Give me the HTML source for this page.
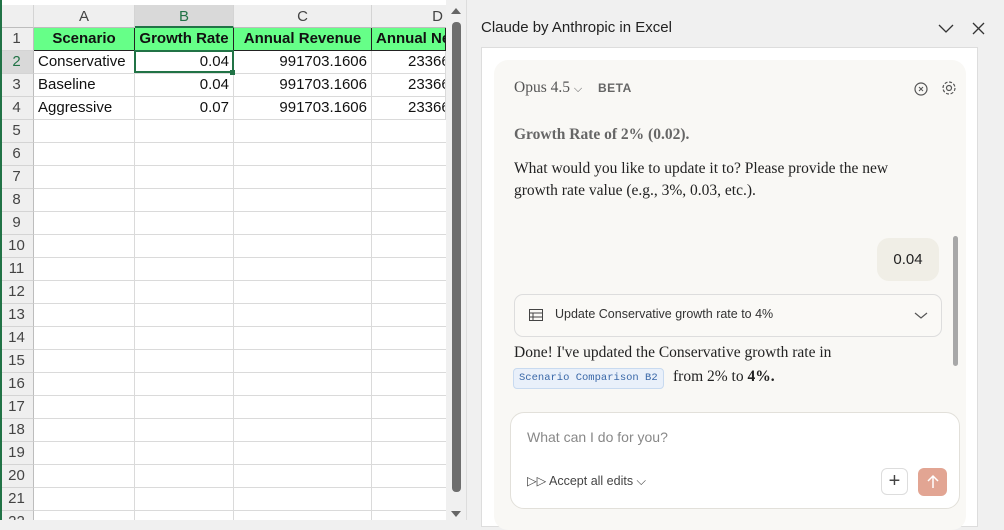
<!DOCTYPE html>
<html><head><style>
body{margin:0;width:1004px;height:520px;overflow:hidden;background:#f0f0f0;font-family:"Liberation Sans",sans-serif;position:relative}
.g{position:absolute;left:0;top:0;width:446px;height:520px;background:#fff;overflow:hidden}
.ch{position:absolute;top:5px;height:23px;background:#efefef;border-right:1px solid #d4d4d4;border-bottom:1px solid #bdbdbd;box-sizing:border-box;text-align:center;font-size:15px;color:#444;line-height:23px}
.rh{position:absolute;left:0;width:34px;height:23px;background:#efefef;border-bottom:1px solid #d4d4d4;border-right:1px solid #bdbdbd;box-sizing:border-box;text-align:center;font-size:15px;color:#444;line-height:22px}
.c{position:absolute;height:23px;border-right:1px solid #dadada;border-bottom:1px solid #dadada;box-sizing:border-box;font-size:15px;line-height:22px;padding:0 4px;white-space:nowrap;overflow:hidden;color:#111}
.h{background:#66ff88;font-weight:bold;border-color:#222;text-align:center}
.r{text-align:right}
.serif{font-family:"Liberation Serif",serif}
</style></head><body>
<div class="g">
<div class="ch" style="left:0;width:34px;background:#efefef"></div>
<div class="ch" style="left:34px;width:101px">A</div>
<div class="ch" style="left:135px;width:99px;background:#d9d9d9;color:#217346;border-bottom:2px solid #217346">B</div>
<div class="ch" style="left:234px;width:138px">C</div>
<div class="ch" style="left:372px;width:80px;text-align:right;padding-right:8px">D</div>
<div id="rows"></div>
</div>
<script>
var s='';for(var i=1;i<=22;i++){var t=28+(i-1)*23;s+='<div class="rh" style="top:'+t+'px'+(i==2?';background:#d9d9d9;color:#217346':'')+'">'+i+'</div>';
if(i>4){s+='<div class="c" style="left:34px;top:'+t+'px;width:101px"></div><div class="c" style="left:135px;top:'+t+'px;width:99px"></div><div class="c" style="left:234px;top:'+t+'px;width:138px"></div><div class="c" style="left:372px;top:'+t+'px;width:80px"></div>';}}
document.getElementById('rows').innerHTML=s;
</script>
<div style="position:absolute;left:0;top:0">
<div class="c h" style="left:34px;top:28px;width:101px">Scenario</div>
<div class="c h" style="left:135px;top:28px;width:99px">Growth Rate</div>
<div class="c h" style="left:234px;top:28px;width:138px">Annual Revenue</div>
<div class="c h" style="left:372px;top:28px;width:74px;text-align:left">Annual Net</div>
<div class="c" style="left:34px;top:51px;width:101px">Conservative</div>
<div class="c r" style="left:135px;top:51px;width:99px">0.04</div>
<div class="c r" style="left:234px;top:51px;width:138px">991703.1606</div>
<div class="c" style="left:372px;top:51px;width:74px;padding-left:36px">23366</div>
<div class="c" style="left:34px;top:74px;width:101px">Baseline</div>
<div class="c r" style="left:135px;top:74px;width:99px">0.04</div>
<div class="c r" style="left:234px;top:74px;width:138px">991703.1606</div>
<div class="c" style="left:372px;top:74px;width:74px;padding-left:36px">23366</div>
<div class="c" style="left:34px;top:97px;width:101px">Aggressive</div>
<div class="c r" style="left:135px;top:97px;width:99px">0.07</div>
<div class="c r" style="left:234px;top:97px;width:138px">991703.1606</div>
<div class="c" style="left:372px;top:97px;width:74px;padding-left:36px">23366</div>
<div style="position:absolute;left:134px;top:50px;width:100px;height:23px;border:2px solid #217346;box-sizing:border-box"></div>
<div style="position:absolute;left:230px;top:70px;width:5px;height:5px;background:#217346"></div>
</div>
<div style="position:absolute;left:0;top:0;width:2px;height:520px;background:#217346"></div>
<!-- scrollbar -->
<div style="position:absolute;left:446px;top:0;width:20px;height:520px;background:#f0f0f0;border-right:1px solid #ddd"></div>
<div style="position:absolute;left:451px;top:8px;width:0;height:0;border-left:5px solid transparent;border-right:5px solid transparent;border-bottom:6px solid #666"></div>
<div style="position:absolute;left:452px;top:22px;width:9px;height:470px;background:#6e6e6e;border-radius:4px"></div>
<div style="position:absolute;left:451px;top:511px;width:0;height:0;border-left:5px solid transparent;border-right:5px solid transparent;border-top:6px solid #666"></div>
<!-- panel -->
<div style="position:absolute;left:481px;top:19px;font-size:15px;color:#222">Claude by Anthropic in Excel</div>
<svg style="position:absolute;left:937px;top:22px" width="50" height="14"><path d="M2 3l7 7 7-7" fill="none" stroke="#333" stroke-width="1.3"/><path d="M36 1l11 11M47 1L36 12" stroke="#333" stroke-width="1.3"/></svg>
<div style="position:absolute;left:481px;top:47px;width:497px;height:480px;background:#fff;border:1px solid #ddd;box-sizing:border-box"></div>
<div style="position:absolute;left:494px;top:60px;width:472px;height:470px;background:#f9f8f5;border-radius:14px"></div>
<div class="serif" style="position:absolute;left:514px;top:79px;font-size:15.5px;color:#555">Opus 4.5 <span style="font-size:11px">⌵</span></div>
<div style="position:absolute;left:598px;top:81px;font-size:12px;font-weight:bold;color:#666;letter-spacing:.5px">BETA</div>
<svg style="position:absolute;left:912px;top:80px" width="50" height="18"><circle cx="9" cy="9" r="6" fill="none" stroke="#555" stroke-width="1.2"/><path d="M7 7l4 4M11 7l-4 4" stroke="#555"/><circle cx="37" cy="8" r="2.5" fill="none" stroke="#555" stroke-width="1.2"/><circle cx="37" cy="8" r="6" fill="none" stroke="#555" stroke-width="1.2" stroke-dasharray="3 1.7"/></svg>
<div class="serif" style="position:absolute;left:514px;top:126px;font-size:15.5px;font-weight:bold;color:#666">Growth Rate of 2% (0.02).</div>
<div class="serif" style="position:absolute;left:514px;top:158px;font-size:15.5px;line-height:22px;color:#222">What would you like to update it to? Please provide the new<br>growth rate value (e.g., 3%, 0.03, etc.).</div>
<div style="position:absolute;left:877px;top:238px;width:62px;height:43px;background:#f0eee6;border-radius:12px;font-size:15px;line-height:43px;text-align:center;color:#222">0.04</div>
<div style="position:absolute;left:953px;top:236px;width:5px;height:130px;background:#a8a8a8;border-radius:3px"></div>
<div style="position:absolute;left:514px;top:294px;width:428px;height:43px;border:1px solid #ddd;border-radius:9px;box-sizing:border-box;background:#faf9f6"></div>
<svg style="position:absolute;left:529px;top:309px" width="14" height="12"><rect x="0.5" y="0.5" width="13" height="11" fill="none" stroke="#444"/><path d="M0 4h14M0 8h14M4 4v8" stroke="#444"/></svg>
<div style="position:absolute;left:555px;top:307px;font-size:12.5px;color:#333">Update Conservative growth rate to 4%</div>
<svg style="position:absolute;left:914px;top:312px" width="14" height="8"><path d="M1 1l6 5 6-5" fill="none" stroke="#555" stroke-width="1.2"/></svg>
<div class="serif" style="position:absolute;left:514px;top:344px;font-size:15.5px;color:#222">Done! I've updated the Conservative growth rate in</div>
<div style="position:absolute;left:513px;top:368px;width:151px;height:21px;background:#e9f0fa;border:1px solid #c8daf0;border-radius:4px;box-sizing:border-box;font-family:'Liberation Mono',monospace;font-size:10.5px;color:#3a68a8;line-height:19px;padding-left:5px;white-space:nowrap;overflow:hidden">Scenario Comparison B2</div>
<div class="serif" style="position:absolute;left:673px;top:368px;font-size:15.5px;color:#222">from 2% to <b>4%.</b></div>
<div style="position:absolute;left:510px;top:412px;width:450px;height:97px;background:#fff;border:1px solid #e2e0da;border-radius:14px;box-sizing:border-box"></div>
<div style="position:absolute;left:527px;top:429px;font-size:14px;color:#888">What can I do for you?</div>
<div style="position:absolute;left:527px;top:473px;font-size:12.5px;color:#444">▷▷ Accept all edits ⌵</div>
<div style="position:absolute;left:881px;top:468px;width:27px;height:27px;border:1px solid #ddd;border-radius:6px;box-sizing:border-box;text-align:center;line-height:24px;font-size:20px;color:#444">+</div>
<div style="position:absolute;left:918px;top:468px;width:29px;height:28px;background:#e2a593;border-radius:6px"></div>
<svg style="position:absolute;left:925px;top:474px" width="16" height="16"><path d="M8 14V2M3 7l5-5 5 5" fill="none" stroke="#fff" stroke-width="1.5"/></svg>
</body></html>
